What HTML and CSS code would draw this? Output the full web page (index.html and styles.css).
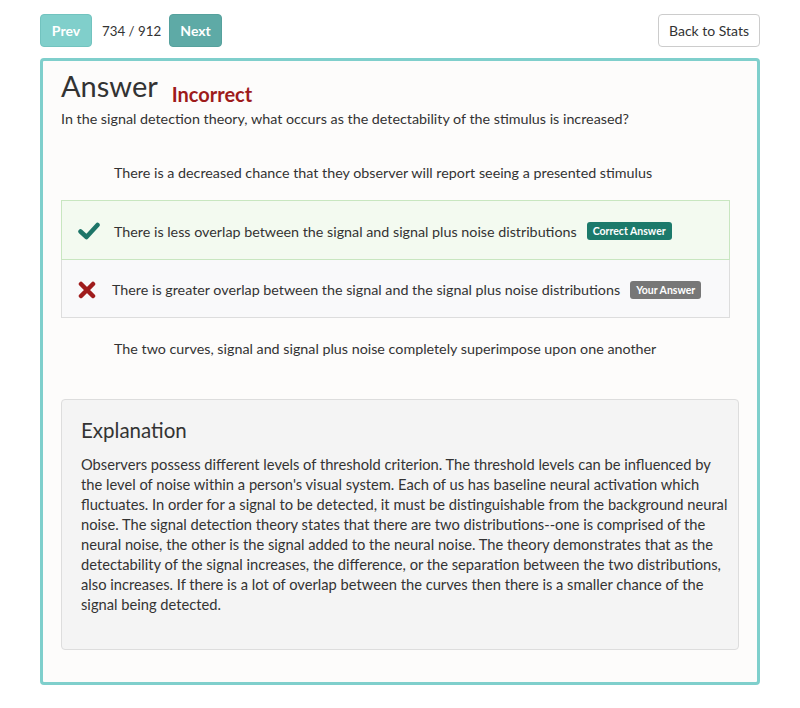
FILE: index.html
```html
<!DOCTYPE html>
<html>
<head>
<meta charset="utf-8">
<link rel="stylesheet" href="styles.css">
</head>
<body>
<div class="page">
  <div class="toolbar">
    <div class="nav">
      <button class="btn btn-prev">Prev</button>
      <span class="counter">734 / 912</span>
      <button class="btn btn-next">Next</button>
    </div>
    <button class="btn btn-back">Back to Stats</button>
  </div>
  <div class="card">
    <div class="title-row">
      <h1 class="title">Answer</h1>
      <span class="status">Incorrect</span>
    </div>
    <p class="question">In the signal detection theory, what occurs as the detectability of the stimulus is increased?</p>
    <ul class="options">
      <li class="option option-first">
        <span class="icon"><svg width="22" height="18" viewBox="0 0 22 18"><path d="M2 9.5l6 5.5L20 3" fill="none" stroke="#fdfcfb" stroke-width="4.5" stroke-linecap="round" stroke-linejoin="round"/></svg></span>
        <span class="text">There is a decreased chance that they observer will report seeing a presented stimulus</span>
      </li>
      <li class="option option-correct">
        <span class="icon"><svg width="22" height="18" viewBox="0 0 22 18"><path d="M2.5 9.5l6 5.5L19.5 3" fill="none" stroke="#1d7568" stroke-width="4.5" stroke-linecap="round" stroke-linejoin="round"/></svg></span>
        <span class="text">There is less overlap between the signal and signal plus noise distributions</span>
        <span class="badge badge-correct">Correct Answer</span>
      </li>
      <li class="option option-wrong">
        <span class="icon"><svg width="18" height="18" viewBox="0 0 18 18"><path d="M3 3l12 12M15 3L3 15" fill="none" stroke="#a01c1c" stroke-width="4.5" stroke-linecap="round"/></svg></span>
        <span class="text">There is greater overlap between the signal and the signal plus noise distributions</span>
        <span class="badge badge-yours">Your Answer</span>
      </li>
      <li class="option">
        <span class="icon"><svg width="22" height="18" viewBox="0 0 22 18"><path d="M2 9.5l6 5.5L20 3" fill="none" stroke="#fdfcfb" stroke-width="4.5" stroke-linecap="round" stroke-linejoin="round"/></svg></span>
        <span class="text">The two curves, signal and signal plus noise completely superimpose upon one another</span>
      </li>
    </ul>
    <div class="explanation">
      <h2 class="exp-title">Explanation</h2>
      <p class="exp-text">Observers possess different levels of threshold criterion. The threshold levels can be influenced by<br>the level of noise within a person's visual system. Each of us has baseline neural activation which<br>fluctuates. In order for a signal to be detected, it must be distinguishable from the background neural<br>noise. The signal detection theory states that there are two distributions--one is comprised of the<br>neural noise, the other is the signal added to the neural noise. The theory demonstrates that as the<br>detectability of the signal increases, the difference, or the separation between the two distributions,<br>also increases. If there is a lot of overlap between the curves then there is a smaller chance of the<br>signal being detected.</p>
    </div>
  </div>
</div>
</body>
</html>
```

FILE: styles.css
```css
* { box-sizing: border-box; }
html, body { margin: 0; padding: 0; background: #ffffff; }
body {
  font-family: Lato, "Open Sans", sans-serif;
  font-size: 14.3px;
  color: #333333;
}
.page {
  padding: 14px 40px 0 40px;
  width: 800px;
}
.toolbar {
  display: flex;
  justify-content: space-between;
  align-items: center;
  height: 33px;
}
.nav {
  display: flex;
  align-items: center;
}
.btn {
  font-family: inherit;
  font-size: 14px;
  height: 33px;
  border-radius: 4px;
  border: 1px solid transparent;
  padding: 0;
  cursor: pointer;
}
.btn-prev {
  width: 52px;
  background: #80cfcb;
  border-color: #72c3bf;
  color: #ffffff;
  font-weight: bold;
}
.btn-next {
  width: 53px;
  background: #5eaaa6;
  border-color: #56a19d;
  color: #ffffff;
  font-weight: bold;
}
.counter {
  margin: 0 8px 0 10px;
  font-size: 13.3px;
  color: #333;
}
.btn-back {
  width: 102px;
  background: #ffffff;
  border-color: #cccccc;
  color: #333333;
}
.card {
  margin-top: 11px;
  border: 3px solid #7fcfcc;
  border-radius: 4px;
  background: #fdfcfb;
  padding: 7px 18px 31px 18px;
  height: 627px;
}
.title-row {
  display: flex;
  align-items: flex-start;
  height: 36px;
}
.title {
  font-size: 29px;
  font-weight: normal;
  margin: 0;
  line-height: 36px;
  color: #333;
}
.status {
  margin-left: 14px;
  margin-top: 17px;
  font-size: 20px;
  font-weight: bold;
  color: #9e1b1b;
  line-height: 19px;
}
.question {
  margin: 5px 0 0 0;
  line-height: 20px;
}
.options {
  list-style: none;
  margin: 13px 9px 0 0;
  padding: 0;
}
.option {
  display: flex;
  align-items: center;
  height: 58px;
  padding: 2px 16px 0 16px;
  border: 1px solid transparent;
}
.option .icon {
  width: 36px;
  display: flex;
  align-items: center;
}
.option-correct {
  height: 60px;
  background: #f3faf0;
  border-color: #c8e6c0;
}
.option-wrong {
  background: #f9f9fa;
  border-color: #dddddd;
  border-top: 0;
}
.option-wrong .icon { width: 34px; }
.badge {
  display: inline-block;
  margin-left: 10px;
  padding: 0 6px;
  height: 18px;
  line-height: 18px;
  border-radius: 3px;
  font-size: 10.5px;
  font-weight: bold;
  color: #ffffff;
}
.badge-correct { background: #1c7a6b; }
.badge-yours { background: #777777; }
.explanation {
  margin-top: 23px;
  background: #f4f4f4;
  border: 1px solid #dddddd;
  border-radius: 4px;
  padding: 16px 4px 35px 19px;
}
.exp-title {
  font-size: 20.5px;
  font-weight: normal;
  margin: 0 0 10px 0;
  line-height: 28px;
  color: #333;
}
.exp-text {
  margin: 0;
  font-size: 14.7px;
  line-height: 20px;
  white-space: nowrap;
}
```
